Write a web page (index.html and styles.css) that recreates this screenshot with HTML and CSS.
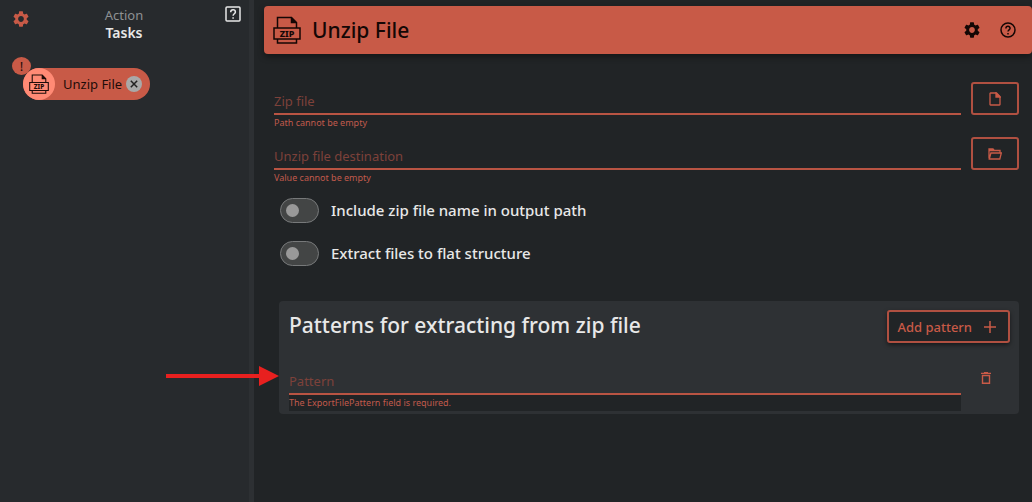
FILE: index.html
```html
<!DOCTYPE html>
<html lang="en">
<head>
    <meta charset="utf-8">
    <title>Unzip File</title>
    <link rel="stylesheet" href="styles.css">
</head>
<body>
    <!-- Shared icon shapes -->
    <svg class="sprite" aria-hidden="true">
        <symbol id="icon-gear" viewBox="2 2 20 20">
            <path d="M19.140 12.940c.04-.3.06-.61.06-.94 0-.32-.02-.64-.07-.94l2.030-1.580a.49.49 0 0 0 .12-.61l-1.920-3.320a.488.488 0 0 0-.59-.22l-2.390.96c-.5-.38-1.030-.7-1.620-.94l-.36-2.540a.484.484 0 0 0-.48-.41h-3.840c-.24 0-.43.17-.47.41l-.36 2.540c-.59.24-1.130.57-1.620.94l-2.390-.96c-.22-.08-.47 0-.59.22L2.740 8.870c-.12.21-.08.47.12.61l2.030 1.580c-.05.3-.09.63-.09.94s.02.64.07.94l-2.030 1.580a.49.49 0 0 0-.12.61l1.920 3.320c.12.22.37.29.59.22l2.390-.96c.5.38 1.030.7 1.620.94l.36 2.540c.05.24.24.41.48.41h3.840c.24 0 .44-.17.47-.41l.36-2.540c.59-.24 1.130-.56 1.620-.94l2.390.96c.22.08.47 0 .59-.22l1.920-3.320c.12-.22.07-.47-.12-.61l-2.010-1.580zM12 15.600c-1.980 0-3.600-1.620-3.600-3.600s1.620-3.600 3.600-3.600 3.600 1.620 3.600 3.600-1.620 3.600-3.600 3.600z"/>
        </symbol>
        <symbol id="icon-zip" viewBox="0 0 28 28">
            <g fill="none" stroke="currentColor" stroke-width="1.500">
                <path d="M4.500 12V1.500h14l5 5V12M18.500 1.500v5h5M4.500 23v4h19v-4"/>
                <path d="M1 12h26v11H1z"/>
            </g>
            <path fill="currentColor" d="M18.500 1.500v5h5z"/>
            <text class="zip-text" x="14" y="20.500" text-anchor="middle">ZIP</text>
        </symbol>
    </svg>

    <div class="app">
        <!-- Task list -->
        <aside class="sidebar">
            <header class="sidebar-header">
                <button type="button" class="icon-button accent" aria-label="Settings">
                    <svg width="16" height="16"><use href="#icon-gear"/></svg>
                </button>
                <div class="sidebar-title">
                    <span class="sidebar-kind">Action</span>
                    <h2>Tasks</h2>
                </div>
                <button type="button" class="icon-button help-box" aria-label="Help">
                    <svg width="16" height="16" viewBox="0 0 16 16" fill="none" stroke="currentColor" stroke-width="1.500">
                        <rect x="1" y="1" width="14" height="14" rx="1"/>
                        <path d="M5.700 6.200c0-3.200 4.700-3 4.700-.2 0 1.600-2.300 1.900-2.300 3.700M8.100 11.200v1.600"/>
                    </svg>
                </button>
            </header>
            <div class="task">
                <span class="task-error">!</span>
                <span class="task-icon"><svg width="20" height="20"><use href="#icon-zip"/></svg></span>
                <span class="task-name">Unzip File</span>
                <button type="button" class="task-remove" aria-label="Remove task">
                    <svg width="8" height="8" viewBox="0 0 8 8" stroke="currentColor" stroke-width="1.500"><path d="M.8.8l6.400 6.400M7.200.8L.8 7.200"/></svg>
                </button>
            </div>
        </aside>

        <!-- Settings of the selected task -->
        <main class="content">
            <header class="title-bar">
                <svg width="28" height="28"><use href="#icon-zip"/></svg>
                <h1>Unzip File</h1>
                <button type="button" class="icon-button" aria-label="Settings">
                    <svg width="16" height="16"><use href="#icon-gear"/></svg>
                </button>
                <button type="button" class="icon-button" aria-label="Help">
                    <svg width="16" height="16" viewBox="0 0 16 16" fill="none" stroke="currentColor" stroke-width="1.500">
                        <circle cx="8" cy="8" r="7"/>
                        <path d="M5.900 6.500c0-2.900 4.200-2.800 4.200-.2 0 1.500-2.100 1.700-2.100 3.300M8 10.900v1.500"/>
                    </svg>
                </button>
            </header>

            <form class="task-form">
                <div class="field-row">
                    <div class="field">
                        <label for="zipFile">Zip file</label>
                        <input type="text" id="zipFile">
                        <p class="field-error">Path cannot be empty</p>
                    </div>
                    <button type="button" class="outline-button browse" aria-label="Browse for file">
                        <svg width="12" height="14" viewBox="0 0 12 14" fill="none" stroke="currentColor" stroke-width="1.300">
                            <path d="M1.500 1h6L11 4.500v8a.5.5 0 0 1-.5.5h-9a.5.5 0 0 1-.5-.5v-11a.5.5 0 0 1 .5-.5z"/>
                            <path fill="currentColor" d="M7 1v4h4z"/>
                        </svg>
                    </button>
                </div>
                <div class="field-row">
                    <div class="field">
                        <label for="destination">Unzip file destination</label>
                        <input type="text" id="destination">
                        <p class="field-error">Value cannot be empty</p>
                    </div>
                    <button type="button" class="outline-button browse" aria-label="Browse for folder">
                        <svg width="14" height="12" viewBox="0 0 14 12" fill="none" stroke="currentColor" stroke-width="1.300">
                            <path d="M1 10.500V1h4l1.300 1.500H12v2M1 2.500h5M1.300 11l1.600-6h10.400L11.800 11z"/>
                        </svg>
                    </button>
                </div>

                <div class="switch-row">
                    <input type="checkbox" class="switch" id="includeName">
                    <label for="includeName">Include zip file name in output path</label>
                </div>
                <div class="switch-row">
                    <input type="checkbox" class="switch" id="flatStructure">
                    <label for="flatStructure">Extract files to flat structure</label>
                </div>

                <section class="patterns">
                    <svg class="pointer" width="113" height="20" viewBox="0 0 113 20" aria-hidden="true">
                        <path d="M0 8h93V0l20 10-20 10v-8H0z"/>
                    </svg>
                    <div class="patterns-header">
                        <h2>Patterns for extracting from zip file</h2>
                        <button type="button" class="outline-button add-pattern">
                            Add pattern
                            <svg width="12" height="12" viewBox="0 0 12 12" stroke="currentColor" stroke-width="1.500"><path d="M6 0v12M0 6h12"/></svg>
                        </button>
                    </div>
                    <div class="pattern-row">
                        <div class="field">
                            <label for="pattern">Pattern</label>
                            <input type="text" id="pattern">
                            <p class="field-error filled">The ExportFilePattern field is required.</p>
                        </div>
                        <button type="button" class="icon-button accent" aria-label="Delete pattern">
                            <svg width="10" height="12" viewBox="0 0 10 12" fill="none" stroke="currentColor" stroke-width="1.400">
                                <path d="M0 1.400h10M3 .7h4M1.500 3.500h7v7.800h-7z"/>
                            </svg>
                        </button>
                    </div>
                </section>
            </form>
        </main>
    </div>
</body>
</html>
```
FILE: styles.css
```css
* {
    box-sizing: border-box;
}

body {
    margin: 0;
    background-color: #212426;
    color: #e8e8e8;
    font-family: "Segoe UI", "Noto Sans", "Open Sans", sans-serif;
    font-size: 13px;
}

h1, h2, p {
    margin: 0;
}

button, input {
    font: inherit;
    color: inherit;
}

svg {
    display: block;
}

.sprite {
    display: none;
}

.zip-text {
    fill: currentColor;
    font-size: 9px;
    font-weight: 800;
}

.app {
    display: flex;
    min-height: 100vh;
}

/* Sidebar */
.sidebar {
    width: 254px;
    flex-shrink: 0;
    background-color: #272a2d;
    border-right: 5px solid #2d3033;
}

.sidebar-header {
    display: grid;
    grid-template-columns: 16px 1fr 16px;
    align-items: start;
    padding: 6px 8px 0 13px;
}

.sidebar-header .accent {
    margin-top: 5px;
}

.sidebar-title {
    padding-right: 6px;
    text-align: center;
    line-height: 18px;
}

.sidebar-kind {
    color: #8e9193;
}

.sidebar-title h2 {
    font-size: 14px;
    font-weight: 600;
    line-height: 18px;
}

.icon-button {
    padding: 0;
    border: 0;
    background: none;
    fill: currentColor;
    cursor: pointer;
}

.accent {
    color: #c85a47;
}

.help-box {
    color: #e8e8e8;
}

.task {
    position: relative;
    display: inline-flex;
    align-items: center;
    height: 32px;
    margin: 26px 0 0 23px;
    padding-right: 8px;
    border-radius: 16px;
    background-color: #c85a47;
    color: #1d0c09;
}

.task-icon {
    display: grid;
    place-items: center;
    width: 32px;
    height: 32px;
    border-radius: 50%;
    background-color: #ff8a75;
}

.task-name {
    margin: 0 4px 0 8px;
}

.task-remove {
    display: grid;
    place-items: center;
    width: 16px;
    height: 16px;
    padding: 0;
    border: 0;
    border-radius: 50%;
    background-color: #a9a9a9;
    color: #222;
}

.task-error {
    position: absolute;
    top: -11px;
    left: -11px;
    width: 19px;
    height: 18px;
    border-radius: 50%;
    background-color: #c85a47;
    line-height: 18px;
    text-align: center;
}

/* Title bar */
.content {
    flex: 1;
    min-width: 0;
    padding: 6px 0 0 10px;
}

.title-bar {
    display: flex;
    align-items: center;
    gap: 20px;
    height: 48px;
    padding: 0 16px 0 9px;
    border-radius: 4px;
    background-color: #c85a47;
    box-shadow: 0 3px 6px rgba(0, 0, 0, 0.4);
    color: #140705;
}

.title-bar h1 {
    flex: 1;
    margin-left: -9px;
    font-size: 21px;
    font-weight: 500;
}

/* Form */
.task-form {
    padding: 28px 13px 0 10px;
}

.field-row {
    display: flex;
    gap: 10px;
    height: 55px;
}

.field {
    flex: 1;
    display: grid;
    grid-template-rows: 33px 16px;
}

.field label,
.field input {
    grid-area: 1 / 1;
}

.field label {
    align-self: end;
    padding-bottom: 5px;
    line-height: 18px;
    color: #7d413a;
}

.field input {
    min-width: 0;
    padding: 10px 0 0;
    border: 0;
    border-bottom: 2px solid #b95443;
    background: none;
    outline: none;
}

.field-error {
    font-size: 9px;
    line-height: 16px;
    color: #c05a4c;
}

.field-error.filled {
    background-color: #212426;
}

.outline-button {
    display: flex;
    justify-content: center;
    align-items: center;
    height: 33px;
    border: 2px solid #b05041;
    border-radius: 3px;
    background-color: #212426;
    color: #c85a47;
    cursor: pointer;
}

.browse {
    width: 48px;
    padding: 0;
}

.switch-row {
    display: flex;
    align-items: center;
    gap: 12px;
    margin: 6px 0 18px 6px;
    font-size: 15px;
    font-weight: 500;
    line-height: 25px;
}

.switch {
    appearance: none;
    width: 39px;
    height: 25px;
    margin: 0;
    padding: 5px;
    border: 1px solid #77797a;
    border-radius: 13px;
    background-color: #434545;
}

.switch::before {
    content: "";
    display: block;
    width: 13px;
    height: 13px;
    border-radius: 50%;
    background-color: #999;
}

.switch:checked::before {
    margin-left: auto;
    background-color: #c85a47;
}

.switch-row + .switch-row {
    margin-top: 0;
}

/* Patterns */
.patterns {
    position: relative;
    margin: 35px 0 0 5px;
    padding: 9px 9px 3px 10px;
    border-radius: 4px;
    background-color: #2e3134;
}

.patterns-header {
    display: flex;
    justify-content: space-between;
    align-items: flex-start;
}

.patterns-header h2 {
    font-size: 21px;
    font-weight: 500;
    line-height: 30px;
}

.add-pattern {
    gap: 12px;
    padding: 0 12px 0 8px;
    box-shadow: 0 2px 4px rgba(0, 0, 0, 0.5);
    font-weight: 500;
}

.pattern-row {
    display: flex;
    align-items: center;
    gap: 20px;
    margin-top: 19px;
    padding-right: 19px;
}

.pattern-row .icon-button {
    margin-bottom: 18px;
}

/* Callout arrow over the panel's left edge */
.pointer {
    position: absolute;
    top: 65px;
    right: 100%;
    fill: #e8201f;
}
```
